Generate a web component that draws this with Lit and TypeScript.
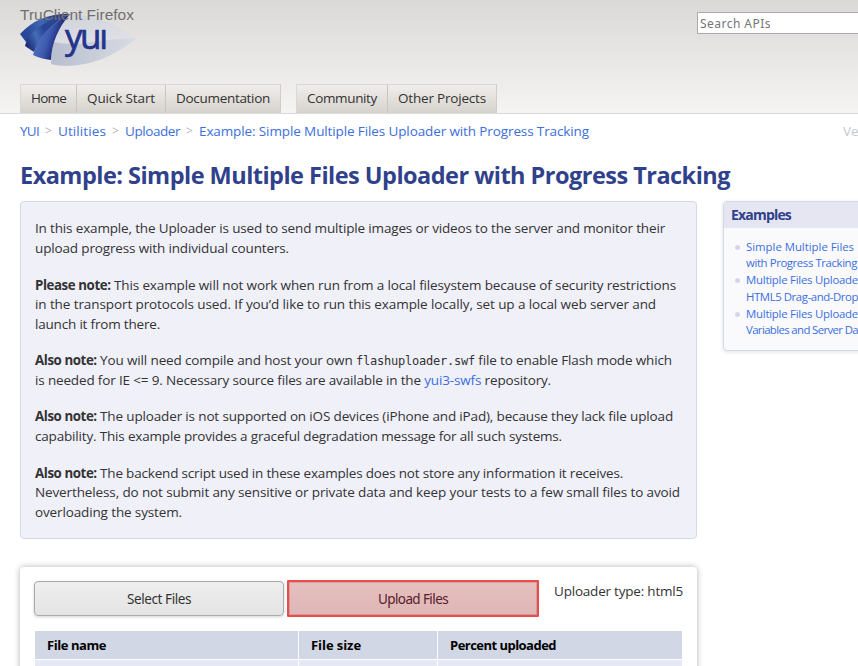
import { LitElement, html, css, svg } from "lit";
import { customElement, property } from "lit/decorators.js";

/** A single line of text whose tracking is adjusted to fill a given measure. */
@customElement("fit-line")
class FitLine extends LitElement {
  @property({ type: Number }) w = 0;
  static styles = css`
    :host { display: inline-block; white-space: nowrap; }
    span { display: inline-block; }
  `;
  firstUpdated() {
    const el = this.renderRoot.querySelector("span") as HTMLElement;
    // Bold and code runs carry their own tracking, so only the rest is stretched.
    const fixed = Array.from(this.querySelectorAll("b, code"))
      .reduce((sum, e) => sum + (e.textContent || "").length, 0);
    const n = (this.textContent || "").trim().length - fixed;
    if (n > 0 && this.w) {
      const width = el.getBoundingClientRect().width;
      el.style.letterSpacing = `${(this.w - width) / n}px`;
    }
    this.style.width = `${this.w}px`;
  }
  render() { return html`<span><slot></slot></span>`; }
}

@customElement("yui-logo")
class YuiLogo extends LitElement {
  static styles = css`
    :host { display: block; width: 120px; height: 56px; }
    svg { display: block; }
    text { font-family: "Open Sans", sans-serif; font-size: 35px; fill: #24348c; stroke: #24348c; stroke-width: 0.7px; stroke-linejoin: round; }
  `;
  render() {
    return html`<svg width="120" height="56" viewBox="20 13 120 56">${svg`
      <defs>
        <linearGradient id="leaf" x1="0" y1="0" x2="0.3" y2="1">
          <stop offset="0" stop-color="#cfd1d9"/><stop offset="1" stop-color="#e6e8ed"/>
        </linearGradient>
        <linearGradient id="low" x1="0" y1="0" x2="1" y2="0">
          <stop offset="0" stop-color="#b9bfcf"/><stop offset="1" stop-color="#d8dbe3"/>
        </linearGradient>
        <linearGradient id="a" gradientUnits="userSpaceOnUse" x1="24" y1="32" x2="62" y2="18">
          <stop offset="0" stop-color="#27469a"/><stop offset="0.5" stop-color="#4067b2"/><stop offset="1" stop-color="#1c2c7c"/>
        </linearGradient>
        <linearGradient id="m" gradientUnits="userSpaceOnUse" x1="26" y1="44" x2="46" y2="34">
          <stop offset="0" stop-color="#1c2d7a"/><stop offset="0.55" stop-color="#456cb6"/><stop offset="1" stop-color="#2a4595"/>
        </linearGradient>
        <linearGradient id="b" gradientUnits="userSpaceOnUse" x1="38" y1="40" x2="59" y2="47">
          <stop offset="0" stop-color="#4a6dbc"/><stop offset="0.4" stop-color="#3f5cb0"/><stop offset="1" stop-color="#171f70"/>
        </linearGradient>
      </defs>
      <path d="M70 15Q108 18 136 39.500Q104 66 67 67Q58 67 51 65Q51 36 70 15Z" fill="url(#leaf)"/>
      <path d="M54 43Q70 47 92 43Q116 39 136 39.500Q104 66 67 67Q58 67 51 65Q51 54 54 43Z" fill="url(#low)"/>
      <path d="M70 15Q39 14 20 35L26 43Q42 22 70 15Z" fill="url(#a)"/>
      <path d="M70 15Q40 22 27 40L25 47L34 53Q44 28 70 15Z" fill="url(#m)"/>
      <path d="M70 15Q43 29 35 50L33 56Q41 60 51 61Q52 36 70 15Z" fill="url(#b)"/>
      <text x="65" y="50" textLength="43">yuı</text>`}</svg>`;
  }
}

@customElement("app-root")
class AppRoot extends LitElement {
  static styles = css`
    :host {
      display: block; width: 858px; height: 666px; overflow: hidden; position: relative;
      background: #fff; color: #333; font: 14px/20px "Open Sans", "Noto Sans", sans-serif;
    }
    * { box-sizing: border-box; }
    .watermark { position: absolute; left: 20px; top: 5px; color: #707070; font: 15.5px/19px "Liberation Sans", Arial, sans-serif; }
    header {
      height: 114px; border-bottom: 1px solid #dcdbdb; padding: 12px 0 0 20px;
      background: linear-gradient(#dad9d7, #f5f4f2);
      display: flex; flex-direction: column; justify-content: space-between;
    }
    .top { display: flex; justify-content: space-between; height: 58px; }
    .search {
      width: 161px; height: 22px; background: #fff; border: 1px solid #aaaab0; border-right: 0;
      padding: 0 0 0 2px; color: #757575; font: 12px/21px "Noto Sans", sans-serif;
    }
    nav { display: flex; gap: 15px; }
    .tabs { display: flex; height: 29px; border: 1px solid #cfcecd; border-top-color: #d9d8d7; border-left-color: #d9d8d7; border-bottom: 0; background: linear-gradient(#f0eeeb, #d6d2cc); }
    .tab { padding: 0 10px; line-height: 26px; font-size: 13.5px; }
    .tab + .tab { border-left: 1px solid #c7c6c4; }
    .crumbs { display: flex; height: 35px; padding: 7px 0 0 20px; color: #3b6fdd; line-height: 20px; font-size: 13.5px; }
    .sep { color: #b8b8b8; width: 19px; text-align: center; font-size: 12px; }
    .version { margin-left: auto; width: 15px; color: #c5c9cf; }
    h1 { margin: 0; padding-left: 20px; height: 52px; color: #30418c; font-size: 23.5px; line-height: 52px; font-weight: 700; }
    main { display: flex; align-items: flex-start; gap: 26px; padding-left: 20px; }
    .content { width: 677px; flex: none; }
    .intro { height: 338px; padding: 17.4px 14px 0; background: #f0f0f9; border: 1px solid #d3d8ec; border-radius: 4px; font-size: 13.5px; }
    p { margin: 0 0 16.9px; display: flex; flex-direction: column; line-height: 19.62px; }
    p b { letter-spacing: -0.42px; font-size: 13.3px; }
    code { font: 12px "DejaVu Sans Mono", monospace; letter-spacing: -0.22px; }
    .link { color: #3b6fdd; }
    .side { width: 240px; flex: none; height: 150px; background: #fafafd; border: 1px solid #d3d8ec; border-radius: 4px; box-shadow: 0 1px 4px rgba(0,0,0,.12); overflow: hidden; }
    h2 { margin: 0; height: 26px; padding-left: 7px; background: #e5e6f1; color: #30418c; font-size: 14px; line-height: 26px; }
    ul { margin: 0; padding: 10.600px 0 0 22px; list-style: none; color: #3b6fdd; font-size: 11.4px; line-height: 16.75px; }
    li { display: flex; flex-direction: column; position: relative; }
    li::before { content: ""; position: absolute; left: -11px; top: 6px; width: 5px; height: 5px; border-radius: 50%; background: #d5d6e7; }
    .example { margin-top: 28px; height: 120px; padding: 14px 14px 0; background: #fff; border-radius: 4px; box-shadow: 0 0 6px rgba(0,0,0,.3); }
    .actions { display: flex; height: 50px; }
    .btn {
      width: 250px; height: 35px; border: 1px solid #aaa; border-radius: 4px; background: linear-gradient(#eee, #e4e4e4);
      box-shadow: 0 1px 3px rgba(0,0,0,.18); text-align: center; color: #333; font: 13.5px/35px "Noto Sans", sans-serif;
    }
    .hot { width: 252px; height: 37px; margin: -1px 0 0 3px; border: 2px solid #ec4b4b; border-radius: 1px; background: linear-gradient(#e6bfbf, #deb6b6); color: #56202a; box-shadow: inset 0 0 0 1px rgba(160,80,80,.25); }
    .type { margin-left: 15px; font-size: 13.5px; line-height: 21px; }
    .table { margin-left: 1px; width: 647px; display: grid; grid-template-columns: 263px 138px 244px; gap: 1px; grid-template-rows: 28px 28px; }
    .th { background: #d1d7e5; color: #000; padding-left: 12px; line-height: 29px; font-weight: 700; font-size: 13px; }
    .td { background: #e6e9f5; }
  `;

  private line(w: number, content: unknown) {
    return html`<fit-line w=${w}>${content}</fit-line>`;
  }
  private tab(w: number, label: string) {
    return html`<div class="tab">${this.line(w, label)}</div>`;
  }

  render() {
    const l = this.line;
    return html`
      <header>
        <div class="top"><yui-logo></yui-logo><div class="search">${l(71, "Search APIs")}</div></div>
        <nav>
          <div class="tabs">${this.tab(35, "Home")}${this.tab(68, "Quick Start")}${this.tab(94, "Documentation")}</div>
          <div class="tabs">${this.tab(70, "Community")}${this.tab(88, "Other Projects")}</div>
        </nav>
      </header>
      <div class="watermark">${l(114, "TruClient Firefox")}</div>
      <div class="crumbs">
        ${l(19, "YUI")}<span class="sep">&gt;</span>${l(48, "Utilities")}<span class="sep">&gt;</span>${l(55, "Uploader")}<span class="sep">&gt;</span>${l(390, "Example: Simple Multiple Files Uploader with Progress Tracking")}
        <span class="version">Ve</span>
      </div>
      <h1>${l(710, "Example: Simple Multiple Files Uploader with Progress Tracking")}</h1>
      <main>
        <div class="content">
          <section class="intro">
            <p>${l(630, "In this example, the Uploader is used to send multiple images or videos to the server and monitor their")}${l(254, "upload progress with individual counters.")}</p>
            <p>${l(641, html`<b>Please note:</b> This example will not work when run from a local filesystem because of security restrictions`)}${l(621, "in the transport protocols used. If you’d like to run this example locally, set up a local web server and")}${l(125, "launch it from there.")}</p>
            <p>${l(637, html`<b>Also note:</b> You will need compile and host your own <code>flashuploader.swf</code> file to enable Flash mode which`)}${l(516, html`is needed for IE &lt;= 9. Necessary source files are available in the <span class="link">yui3-swfs</span> repository.`)}</p>
            <p>${l(638, html`<b>Also note:</b> The uploader is not supported on iOS devices (iPhone and iPad), because they lack file upload`)}${l(527, "capability. This example provides a graceful degradation message for all such systems.")}</p>
            <p>${l(588, html`<b>Also note:</b> The backend script used in these examples does not store any information it receives.`)}${l(645, "Nevertheless, do not submit any sensitive or private data and keep your tests to a few small files to avoid")}${l(147, "overloading the system.")}</p>
          </section>
          <section class="example">
            <div class="actions">
              <div class="btn">${l(64, "Select Files")}</div>
              <div class="btn hot">${l(70, "Upload Files")}</div>
              <div class="type">${l(129, "Uploader type: html5")}</div>
            </div>
            <div class="table">
              <div class="th">${l(59, "File name")}</div><div class="th">${l(50, "File size")}</div><div class="th">${l(106, "Percent uploaded")}</div>
              <div class="td"></div><div class="td"></div><div class="td"></div>
            </div>
          </section>
        </div>
        <aside class="side">
          <h2>${l(60, "Examples")}</h2>
          <ul>
            <li>${l(108, "Simple Multiple Files")}${l(111, "with Progress Tracking")}</li>
            <li>${l(112, "Multiple Files Uploade")}${l(112, "HTML5 Drag-and-Drop")}</li>
            <li>${l(112, "Multiple Files Uploade")}${l(112, "Variables and Server Da")}</li>
          </ul>
        </aside>
      </main>`;
  }
}
